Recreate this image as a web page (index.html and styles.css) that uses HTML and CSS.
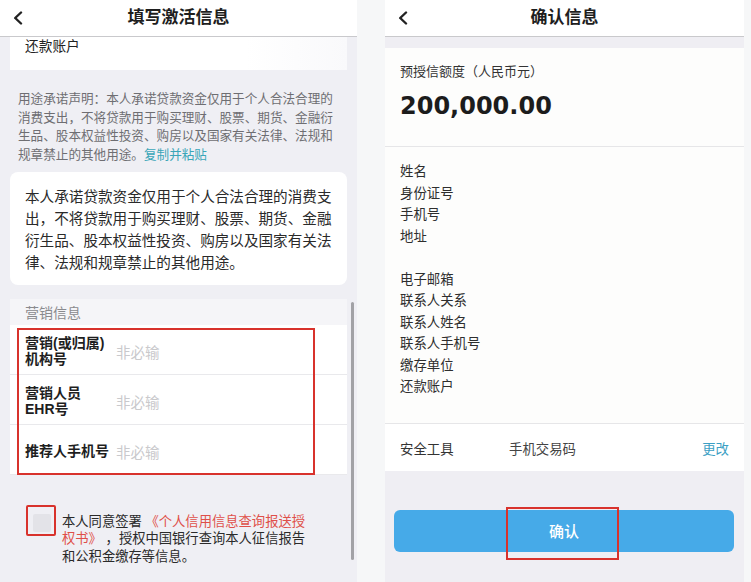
FILE: index.html
```html
<!DOCTYPE html>
<html lang="zh-CN">
<head>
<meta charset="utf-8">
<title>填写激活信息 / 确认信息</title>
<link rel="stylesheet" href="styles.css">
</head>
<body>
<div class="screens">
  <section class="phone phone-left">
    <header class="nav">
      <span class="nav-back"><svg width="10" height="14" viewBox="0 0 10 14"><polyline points="8,1.5 2.2,7 8,12.5" fill="none" stroke="#222" stroke-width="2.4" stroke-linecap="round" stroke-linejoin="round"/></svg></span>
      <h1 class="nav-title">填写激活信息</h1>
      <span></span>
    </header>
    <div class="card card-account">还款账户</div>
    <p class="notice">用途承诺声明：本人承诺贷款资金仅用于个人合法合理的<br>消费支出，不将贷款用于购买理财、股票、期货、金融衍<br>生品、股本权益性投资、购房以及国家有关法律、法规和<br>规章禁止的其他用途。<a class="link-teal">复制并粘贴</a></p>
    <div class="card card-statement">本人承诺贷款资金仅用于个人合法合理的消费支<br>出，不将贷款用于购买理财、股票、期货、金融<br>衍生品、股本权益性投资、购房以及国家有关法<br>律、法规和规章禁止的其他用途。</div>
    <div class="group">
      <div class="group-head">营销信息</div>
      <div class="field"><div class="field-label">营销(或归属)<br>机构号</div><div class="field-input">非必输</div></div>
      <div class="field"><div class="field-label">营销人员<br>EHR号</div><div class="field-input">非必输</div></div>
      <div class="field"><div class="field-label">推荐人手机号</div><div class="field-input">非必输</div></div>
      <div class="annot annot-fields"></div>
    </div>
    <div class="agree">
      <span class="check-frame"><span class="check"></span></span>
      <p class="agree-text">本人同意签署 <span class="link-red">《个人信用信息查询报送授<br>权书》</span> ，授权中国银行查询本人征信报告<br>和公积金缴存等信息。</p>
    </div>
    <div class="scrollbar"></div>
  </section>

  <section class="phone phone-right">
    <header class="nav">
      <span class="nav-back"><svg width="10" height="14" viewBox="0 0 10 14"><polyline points="8,1.5 2.2,7 8,12.5" fill="none" stroke="#222" stroke-width="2.4" stroke-linecap="round" stroke-linejoin="round"/></svg></span>
      <h1 class="nav-title">确认信息</h1>
      <span></span>
    </header>
    <div class="band"></div>
    <div class="panel panel-amount">
      <div class="amount-label">预授信额度（人民币元）</div>
      <div class="amount">200,000.00</div>
    </div>
    <div class="panel panel-info">
      <ul class="info-list">
        <li>姓名</li>
        <li>身份证号</li>
        <li>手机号</li>
        <li>地址</li>
        <li class="blank"></li>
        <li>电子邮箱</li>
        <li>联系人关系</li>
        <li>联系人姓名</li>
        <li>联系人手机号</li>
        <li>缴存单位</li>
        <li>还款账户</li>
      </ul>
    </div>
    <div class="panel panel-tool">
      <span class="tool-label">安全工具</span>
      <span class="tool-value">手机交易码</span>
      <a class="tool-change">更改</a>
    </div>
    <div class="actions">
      <button class="btn-confirm">确认</button>
      <div class="annot annot-btn"></div>
    </div>
  </section>
</div>
</body>
</html>
```

FILE: styles.css
```css
* { box-sizing: border-box; }

html, body {
  margin: 0;
  padding: 0;
}

body {
  width: 751px;
  height: 582px;
  overflow: hidden;
  background: #f6f7f8;
  font-family: "Liberation Sans", "Noto Sans CJK SC", sans-serif;
  color: #333;
}

.screens {
  display: flex;
  height: 582px;
}

.phone {
  position: relative;
  height: 582px;
  overflow: hidden;
  display: flex;
  flex-direction: column;
}

.phone-left {
  width: 357px;
  background: #efeff4;
}

.phone-right {
  width: 359px;
  margin-left: 28px;
  background: #efeef3;
}

/* nav bar */
.nav {
  height: 37px;
  flex: none;
  background: #fff;
  border-bottom: 1px solid #c9c9cc;
  display: grid;
  grid-template-columns: 1fr auto 1fr;
  align-items: center;
}

.nav-back {
  padding-left: 13px;
  display: flex;
  align-items: center;
  height: 36px;
}

.nav-title {
  margin: 0;
  font-size: 17px;
  font-weight: bold;
  color: #1e1e1e;
  line-height: 36px;
}

/* left screen */
.card {
  background: #fff;
  margin: 0 10px;
}

.card-account {
  height: 33px;
  padding: 1px 0 0 15px;
  font-size: 13.7px;
  line-height: 18px;
  color: #222;
  background: linear-gradient(to right, #fff 0%, #fff 70%, #f9f9fb 100%);
}

.notice {
  margin: 20px 0 0 0;
  padding-left: 18px;
  font-size: 12.6px;
  line-height: 18.7px;
  color: #6e6e72;
  white-space: nowrap;
}

.link-teal {
  color: #3aa6b8;
}

.card-statement {
  margin-top: 7px;
  border-radius: 8px;
  padding: 14px 8px 11px 15px;
  font-size: 14.6px;
  line-height: 22px;
  color: #2a2a2a;
  white-space: nowrap;
}

.group {
  position: relative;
  margin: 14px 10px 0 10px;
}

.group-head {
  height: 26px;
  background: #f5f5f8;
  padding-left: 15px;
  font-size: 14px;
  line-height: 28px;
  color: #8a8a8e;
}

.field {
  height: 50px;
  background: #fff;
  display: flex;
  align-items: center;
  padding: 4px 0 0 15px;
  border-bottom: 1px solid #e9e9ec;
}

.field:last-of-type {
  border-bottom: none;
}

.field-label {
  width: 91px;
  font-size: 14px;
  line-height: 16.5px;
  font-weight: bold;
  color: #1e1e1e;
}

.field-input {
  font-size: 14.5px;
  color: #c9c9cc;
}

.annot {
  position: absolute;
  border: 2px solid #d8322c;
}

.annot-fields {
  left: 7px;
  top: 29px;
  width: 298px;
  height: 147px;
}

.agree {
  display: flex;
  align-items: flex-start;
  margin-top: 30px;
  padding-left: 26px;
}

.check-frame {
  flex: none;
  border: 2px solid #d8322c;
  border-radius: 2px;
  padding: 7px 3px 2px 5px;
}

.check {
  display: block;
  width: 18px;
  height: 18px;
  border-radius: 2px;
  background: #e3e3e8;
}

.agree-text {
  margin: 8px 0 0 6px;
  font-size: 13.3px;
  line-height: 17.5px;
  color: #2a2a2a;
  white-space: nowrap;
}

.link-red {
  color: #df4f49;
}

.scrollbar {
  position: absolute;
  left: 351px;
  top: 302px;
  width: 3px;
  height: 258px;
  border-radius: 2px;
  background: #a2a2a6;
}

/* right screen */
.band {
  height: 11px;
  flex: none;
}

.panel {
  background: #fdfdfc;
  flex: none;
}

.panel-amount {
  padding: 15px 0 25px 15px;
  border-bottom: 1px solid #e6e6e8;
}

.amount-label {
  font-size: 13px;
  line-height: 18px;
  color: #333;
}

.amount {
  margin-top: 10px;
  font-family: "DejaVu Sans", sans-serif;
  font-weight: bold;
  font-size: 24px;
  line-height: 30px;
  color: #1c1c1c;
}

.panel-info {
  padding: 14px 0 25px 15px;
  border-bottom: 1px solid #e6e6e8;
}

.info-list {
  margin: 0;
  padding: 0;
  list-style: none;
  font-size: 13.4px;
  line-height: 21.5px;
  color: #2e2e2e;
}

.info-list .blank {
  height: 21.5px;
}

.panel-tool {
  height: 47px;
  display: flex;
  align-items: center;
  padding: 1px 15px 0 15px;
  font-size: 13.4px;
  color: #333;
  background: #fff;
}

.tool-label {
  width: 109px;
}

.tool-value {
  flex: 1;
  color: #444;
}

.tool-change {
  color: #3c9fc4;
}

.actions {
  position: relative;
  margin-top: 39px;
  padding: 0 10px 0 9px;
}

.btn-confirm {
  display: block;
  width: 100%;
  height: 42px;
  border: none;
  border-radius: 6px;
  background: #46aae8;
  color: #fff;
  font-family: "Noto Sans CJK SC", sans-serif;
  font-size: 15px;
  font-weight: 500;
}

.annot-btn {
  left: 121px;
  top: -3px;
  width: 113px;
  height: 53px;
}
```
